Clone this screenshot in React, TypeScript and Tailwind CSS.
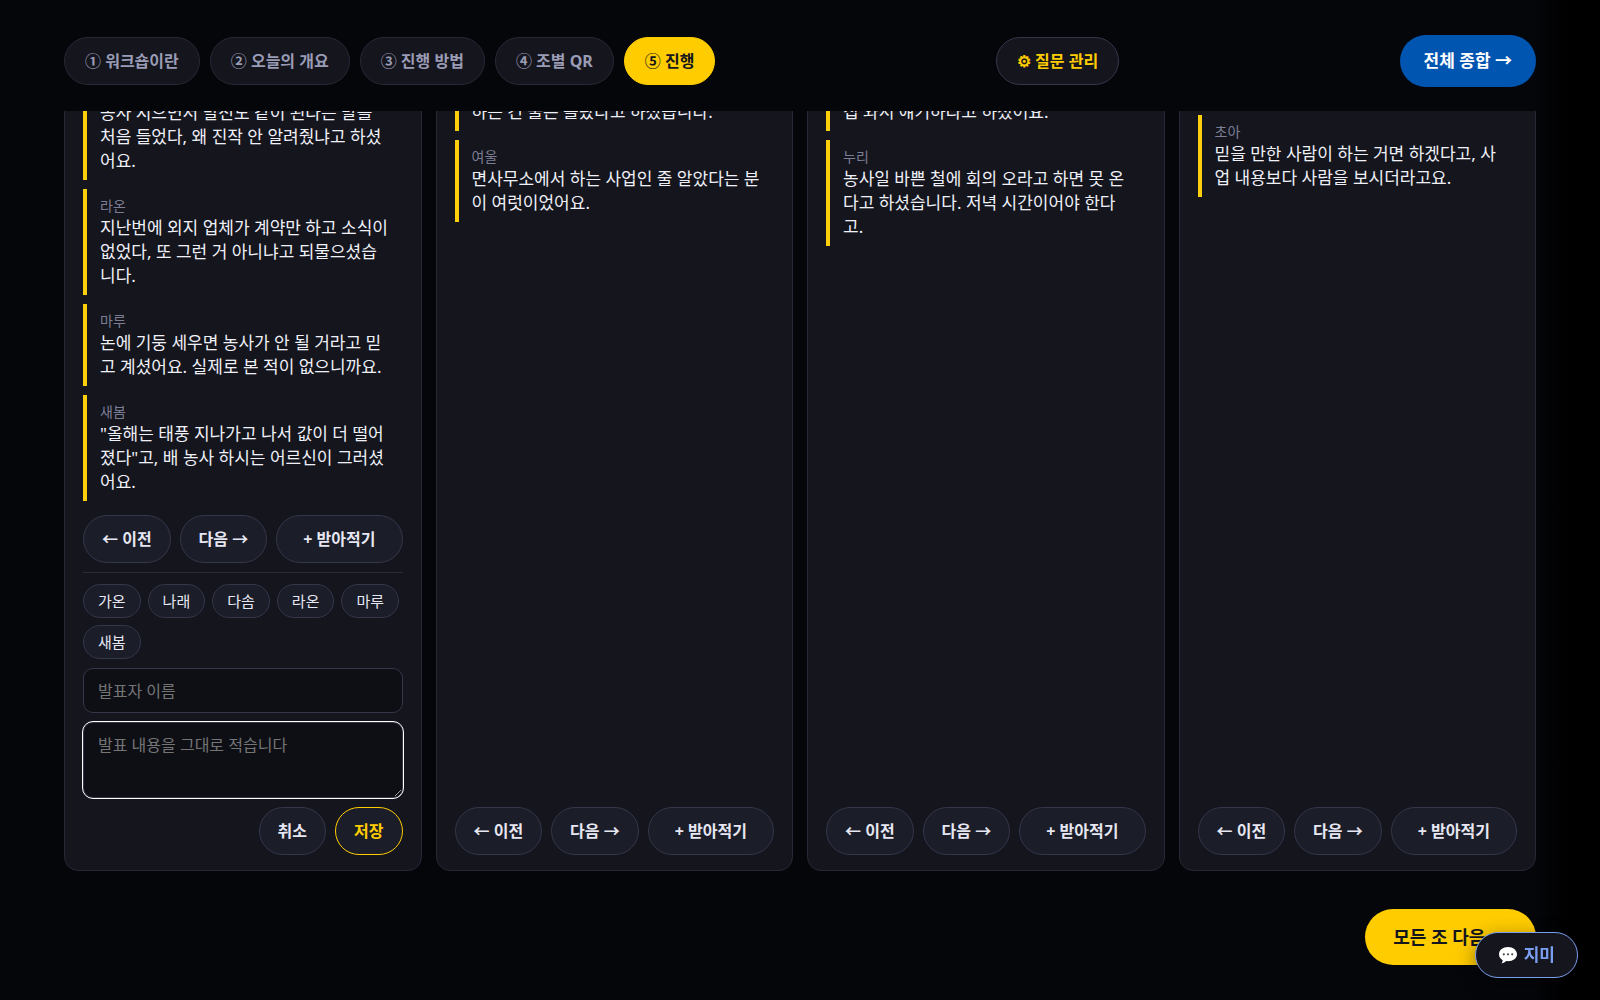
import { useState } from 'react';
import clsx from 'clsx';

interface Note {
  name: string;
  text: string;
}

interface Group {
  id: number;
  question: string;
  notes: Note[];
  members?: string[];
}

const steps = ['① 워크숍이란', '② 오늘의 개요', '③ 진행 방법', '④ 조별 QR', '⑤ 진행'];

const groups: Group[] = [
  {
    id: 1,
    question:
      '마을에서 영농형 태양광 이야기를 꺼냈을 때 어르신들께서 가장 먼저 하신 말씀은 무엇이었고 그 말씀을 듣고 어떤 생각이 드셨나요?',
    notes: [
      { name: '다솜', text: '농사 지으면서 발전도 같이 된다는 말을 처음 들었다, 왜 진작 안 알려줬냐고 하셨어요.' },
      { name: '라온', text: '지난번에 외지 업체가 계약만 하고 소식이 없었다, 또 그런 거 아니냐고 되물으셨습니다.' },
      { name: '마루', text: '논에 기둥 세우면 농사가 안 될 거라고 믿고 계셨어요. 실제로 본 적이 없으니까요.' },
      { name: '새봄', text: '"올해는 태풍 지나가고 나서 값이 더 떨어졌다"고, 배 농사 하시는 어르신이 그러셨어요.' },
    ],
    members: ['가온', '나래', '다솜', '라온', '마루', '새봄'],
  },
  {
    id: 2,
    question: '주민들께서 이 사업을 누가 하는 것으로 알고 계셨는지 들은 대로 나눠 주세요.',
    notes: [
      { name: '바다', text: '설명회는 또 갔는데 우리 마을도 다 같이 하는 건 줄은 몰랐다고 하셨습니다.' },
      { name: '여울', text: '면사무소에서 하는 사업인 줄 알았다는 분이 여럿이었어요.' },
    ],
  },
  {
    id: 3,
    question: '주민들과 만나는 자리는 언제 어디에서 어떻게 마련하면 좋을까요?',
    notes: [
      { name: '하늘', text: '회관에 모이라 하지 말고 차라리 한 집 한 집 와서 얘기하라고 하셨어요.' },
      { name: '누리', text: '농사일 바쁜 철에 회의 오라고 하면 못 온다고 하셨습니다. 저녁 시간이어야 한다고.' },
    ],
  },
  {
    id: 4,
    question: '무엇이 있으면 함께하시겠어요?',
    notes: [
      { name: '이든', text: '계약서를 읽어 줄 사람이 옆에 있으면 좋겠다고 여러 번 말씀하셨어요.' },
      { name: '초아', text: '믿을 만한 사람이 하는 거면 하겠다고, 사업 내용보다 사람을 보시더라고요.' },
    ],
  },
];

const pill =
  'h-12 shrink-0 cursor-pointer whitespace-nowrap rounded-full border border-[#34364a] bg-[#1b1d29] px-[18px] text-base font-bold text-[#e6e7f2]';
const field =
  'block w-full rounded-[10px] border border-[#34364a] bg-[#0e0f15] px-[14px] text-base text-white placeholder:text-[#757575]';

function NoteItem({ note }: { note: Note }) {
  return (
    <li className="border-l-4 border-[#fccf0c] px-[13px] py-[7px]">
      <div className="text-sm leading-5 text-[#7c7e95]">{note.name}</div>
      <p className="text-[17px] leading-6 text-[#eff0f8]">{note.text}</p>
    </li>
  );
}

function NoteForm({ members }: { members: string[] }) {
  const [name, setName] = useState('');
  const [text, setText] = useState('');

  return (
    <form
      onSubmit={(e) => e.preventDefault()}
      className="mt-[9px] flex flex-col gap-[9px] border-t border-[#292b38] pt-[11px]"
    >
      <div className="flex flex-wrap gap-[7px]">
        {members.map((m) => (
          <button
            key={m}
            type="button"
            onClick={() => setName(m)}
            className="h-[34px] cursor-pointer rounded-full border border-[#34364a] bg-[#1b1d29] px-[14px] text-[15px] text-[#e6e7f2]"
          >
            {m}
          </button>
        ))}
      </div>
      <input
        type="text"
        aria-label="발표자 이름"
        placeholder="발표자 이름"
        value={name}
        onChange={(e) => setName(e.target.value)}
        className={clsx(field, 'h-[45px]')}
      />
      <textarea
        aria-label="발표 내용"
        placeholder="발표 내용을 그대로 적습니다"
        value={text}
        onChange={(e) => setText(e.target.value)}
        className={clsx(field, 'h-[76px] resize-y py-[10px] leading-6 outline-1 outline-white')}
      />
      <div className="flex justify-end gap-[9px]">
        <button type="button" className={pill}>
          취소
        </button>
        <button
          type="submit"
          className="h-12 cursor-pointer rounded-full border border-[#ffcc00] bg-[#1b1d29] px-[18px] text-base font-bold text-[#ffcc00]"
        >
          저장
        </button>
      </div>
    </form>
  );
}

function GroupCard({ group }: { group: Group }) {
  return (
    <section className="flex min-w-0 flex-col rounded-[14px] border border-[#262835] bg-[#14151d] px-[18px] pt-4 pb-[15px]">
      <h2 className="text-xl font-bold text-[#ffcc00]">{group.id}조</h2>
      <p className="mt-2 mb-3 text-base leading-[25px] text-[#9a9cb5]">{group.question}</p>
      <ul className="flex flex-col gap-[9px]">
        {group.notes.map((note) => (
          <NoteItem key={note.name} note={note} />
        ))}
      </ul>
      <div className="mt-auto flex gap-[9px] pt-[14px]">
        <button type="button" className={pill}>
          ← 이전
        </button>
        <button type="button" className={pill}>
          다음 →
        </button>
        <button type="button" className={clsx(pill, 'grow')}>
          + 받아적기
        </button>
      </div>
      {group.members && <NoteForm members={group.members} />}
    </section>
  );
}

export default function App() {
  const [step, setStep] = useState(4);

  return (
    <div className="flex h-screen flex-col bg-linear-to-r from-[#05060a] from-96% to-black font-['Noto_Sans','Noto_Sans_CJK_KR',sans-serif] text-white">
      <header className="flex shrink-0 items-center justify-between px-16 pt-[35px] pb-6">
        <nav className="flex gap-[10px]">
          {steps.map((label, i) => (
            <button
              key={label}
              type="button"
              onClick={() => setStep(i)}
              className={clsx(
                'h-12 cursor-pointer whitespace-nowrap rounded-full border px-5 text-base font-bold',
                i === step
                  ? 'border-[#ffcc00] bg-[#ffcc00] text-[#14151d]'
                  : 'border-[#262835] bg-[#14151d] text-[#9a9cb5]'
              )}
            >
              {label}
            </button>
          ))}
        </nav>
        <button
          type="button"
          className="h-12 cursor-pointer whitespace-nowrap rounded-full border border-[#34364a] bg-[#14151d] px-5 text-base font-bold text-[#ffcc00]"
        >
          ⚙ 질문 관리
        </button>
        <button
          type="button"
          className="h-[52px] cursor-pointer whitespace-nowrap rounded-full bg-[#0055b0] px-6 text-[17px] font-bold text-white"
        >
          전체 종합 →
        </button>
      </header>

      <main className="flex min-h-0 flex-1 flex-col-reverse overflow-y-auto [scrollbar-width:none]">
        <div className="px-16 pb-[35px]">
          <div className="grid grid-cols-4 gap-[14px]">
            {groups.map((group) => (
              <GroupCard key={group.id} group={group} />
            ))}
          </div>
          <div className="mt-[38px] flex justify-end">
            <button
              type="button"
              className="h-14 cursor-pointer whitespace-nowrap rounded-full bg-[#ffcc00] px-7 text-lg font-bold text-[#14151d]"
            >
              모든 조 다음 →
            </button>
          </div>
        </div>
      </main>

      <button
        type="button"
        className="fixed right-[22px] bottom-[22px] flex h-[46px] cursor-pointer items-center gap-[6px] rounded-full border border-[#7b9ff0] bg-[#14151d] px-[22px] text-[17px] font-bold text-[#7b9ff0] shadow-[0_6px_20px_rgba(0,0,0,0.45)]"
      >
        <svg className="h-5 w-5" viewBox="0 0 20 20" aria-hidden="true">
          <path
            d="M10 2C5 2 1 5 1 9.300c0 2.700 1.500 4.700 3.700 5.900-.1 1.200-.5 2.300-1.200 3.200 2-.3 3.600-1.100 4.800-2.300.6.1 1.100.1 1.700.1 5 0 9-2.800 9-6.900S15 2 10 2z"
            fill="#fff"
          />
          <circle cx="5.800" cy="9.300" r="1.100" fill="#4a4a4a" />
          <circle cx="10" cy="9.300" r="1.100" fill="#4a4a4a" />
          <circle cx="14.200" cy="9.300" r="1.100" fill="#4a4a4a" />
        </svg>
        지미
      </button>
    </div>
  );
}
